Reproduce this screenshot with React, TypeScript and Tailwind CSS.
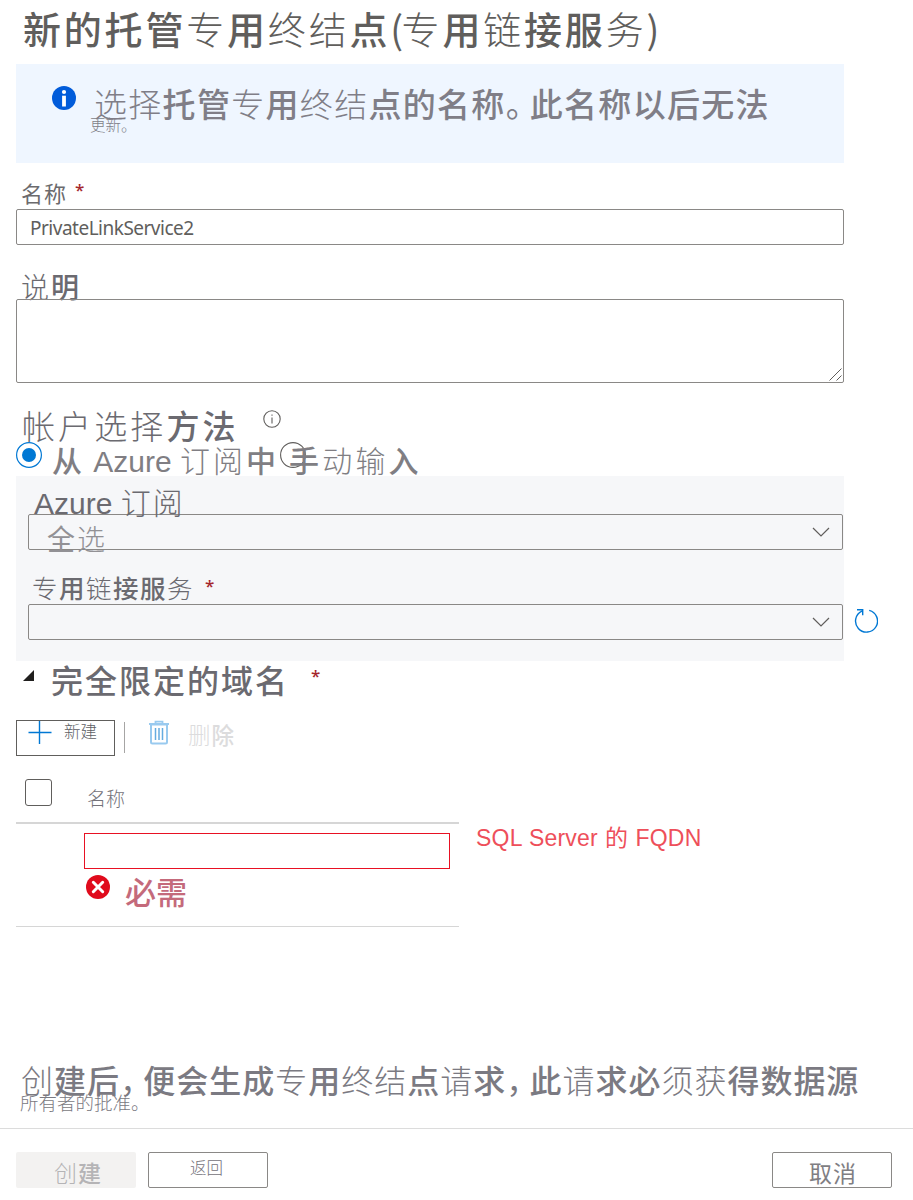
import type { ReactNode } from "react";

const LIGHT = "专终结链务选择帐户说订阅动输创请须获删";

type LabelProps = { text: string; className?: string; thin?: boolean; regular?: boolean };

/** Text run in which the simplified-only glyphs use the light face. */
function Label({ text, className = "", thin = false, regular = false }: LabelProps) {
  const runs = text.match(new RegExp(`[${LIGHT}]+|[A-Za-z ]+|[，。]|[()]|[^${LIGHT}A-Za-z ，。()]+`, "g")) ?? [];
  return (
    <span className={`inline-block whitespace-nowrap ${className}`}>
      {runs.map((run, i) => {
        let face = regular ? "font-normal" : "font-medium";
        if (thin || LIGHT.includes(run[0])) face = "font-light";
        else if (/[A-Za-z ]/.test(run[0])) face = "font-['Liberation_Sans'] font-normal tracking-normal";
        else if (/[()]/.test(run[0])) face = "font-normal tracking-[-1.5px]";
        else if (/[，。]/.test(run[0])) face = "font-normal tracking-[-0.27em]";
        return (
          <span key={i} className={face}>
            {run}
          </span>
        );
      })}
    </span>
  );
}

function Star({ className = "" }: { className?: string }) {
  return <span className={`font-['Noto_Sans'] text-[17px] leading-none font-medium text-[#a4262c] ${className}`}>*</span>;
}

function Chevron() {
  return (
    <svg className="shrink-0" width="18" height="10" viewBox="0 0 18 10" fill="none" stroke="#605e5c" strokeWidth="1.2">
      <path d="M1 1l8 8 8-8" />
    </svg>
  );
}

function Select({ children }: { children?: ReactNode }) {
  return (
    <div className="flex h-9 w-[815px] shrink-0 items-center justify-between rounded-[2px] border border-[#8a8886] pr-3 pl-[18px]">
      <div className="h-9 pt-px">{children}</div>
      <Chevron />
    </div>
  );
}

export default function App() {
  return (
    <div className="flex h-[1200px] w-[913px] flex-col overflow-hidden bg-white font-['Noto_Sans_CJK_SC',sans-serif]">
      <h1 className="h-16 pl-[23px] text-[#605e5c]">
        <Label text="新的托管专用终结点(专用链接服务)" className="text-[38px] leading-[56px] tracking-[2.8px]" />
      </h1>

      <section className="ml-4 flex h-[99px] w-[828px] shrink-0 bg-[#eff6ff] pl-9">
        <svg className="mt-[22px] shrink-0" width="24" height="24" viewBox="0 0 24 24">
          <circle cx="12" cy="12" r="12" fill="#015cda" />
          <circle cx="12" cy="6" r="2.1" fill="#fff" />
          <rect x="10.1" y="9.7" width="3.8" height="10.8" fill="#fff" />
        </svg>
        <div className="flex flex-col pl-[14px] text-[#807e87]">
          <Label text="选择托管专用终结点的名称。此名称以后无法" className="h-[53px] pt-[15px] pl-1 text-[33px] leading-[49px] tracking-[1.3px]" />
          <Label thin text="更新。" className="-mt-px text-[15.5px] leading-4" />
        </div>
      </section>

      <section className="h-[136px] shrink-0 pl-4">
        <div className="flex h-[46px] items-start pt-[17px] pl-[5px] text-[#6b6a6d]">
          <Label regular text="名称" className="text-[22px] leading-6 tracking-[1px]" />
          <Star className="ml-[8px] pt-px" />
        </div>
        <div className="flex h-9 w-[828px] items-center rounded-[2px] border border-[#8a8886] pt-[2px] pl-[13px] font-['Noto_Sans'] text-[19px] tracking-[-0.5px] text-[#605e5c]">
          PrivateLinkService2
        </div>
        <div className="pt-[25px] pl-[5px] text-[#6b6a70]">
          <Label text="说明" className="text-[28px] leading-8 tracking-[2px]" />
        </div>
      </section>

      <div className="ml-4 flex h-[84px] w-[828px] shrink-0 items-end justify-end rounded-[2px] border border-[#8a8886] p-px">
        <svg width="13" height="13" viewBox="0 0 13 13" stroke="#605e5c" strokeWidth="1">
          <path d="M0.5 12.5l12-12M7.5 12.5l5-5" />
        </svg>
      </div>

      <section className="flex h-[93px] shrink-0 flex-col pl-4">
        <div className="flex h-[59px] items-start pl-[6px] text-[#6b6a70]">
          <Label text="帐户选择方法" className="pt-5 text-[33px] leading-[44px] tracking-[3.1px]" />
          <svg className="mt-[27px] ml-6" width="18" height="18" viewBox="0 0 18 18" fill="none" stroke="#605e5c" strokeWidth="1.1">
            <circle cx="9" cy="9" r="8.2" />
            <path d="M9 7.5v6M9 4.5v1.3" />
          </svg>
        </div>
        <div className="flex h-[34px] items-start text-[#807e83]">
          <svg width="26" height="26" viewBox="0 0 26 26">
            <circle cx="13" cy="13" r="12.4" fill="#fff" stroke="#0078d4" strokeWidth="1.2" />
            <circle cx="13" cy="13" r="7" fill="#0078d4" />
          </svg>
          <Label text="从 Azure 订阅中" className="-mt-[2px] ml-[10px] w-[228px] text-[30px] leading-[39px] tracking-[3px]" />
          <svg className="shrink-0" width="26" height="26" viewBox="0 0 26 26">
            <circle cx="13" cy="13" r="12.4" fill="none" stroke="#605e5c" strokeWidth="1.1" />
          </svg>
          <Label text="手动输入" className="-mt-[2px] -ml-[17px] text-[30px] leading-[39px] tracking-[3.2px]" />
        </div>
      </section>

      <section className="ml-4 h-[185px] w-[828px] shrink-0 bg-[#f6f7f9] pl-3">
        <div className="h-[38px] pl-[6px] text-[#6b6a70]">
          <Label text="Azure 订阅" className="pt-[5px] text-[30px] leading-[40px] tracking-[2px]" />
        </div>
        <Select>
          <Label regular text="全选" className="pt-[3px] text-[28px] leading-10 tracking-[2px] text-[#929195]" />
        </Select>
        <div className="flex h-[54px] items-start pt-[21px] pl-[4px] text-[#6b6a70]">
          <Label text="专用链接服务" className="text-[25.5px] leading-8 tracking-[1.5px]" />
          <Star className="ml-[11px] pt-[6px]" />
        </div>
        <div className="flex w-[860px] items-center gap-[11px]">
          <Select />
          <svg className="-mt-[3px] shrink-0" width="24" height="25" viewBox="0 0 24 25" fill="none" stroke="#0078d4" strokeWidth="1.4">
            <path d="M7.9 3.1A11 11 0 1 0 15.2 2.4M3 1.7h5.7v5.6" />
          </svg>
        </div>
      </section>

      <section className="flex h-[59px] shrink-0 items-start pl-[23px] text-[#6b6a70]">
        <svg className="mt-[9px]" width="11" height="11" viewBox="0 0 11 11">
          <path d="M11 0v11H0z" fill="#201f1e" />
        </svg>
        <Label text="完全限定的域名" className="ml-[17px] text-[32px] leading-[36px] tracking-[2px]" />
        <Star className="ml-[22px] pt-[6px]" />
      </section>

      <section className="flex h-9 shrink-0 items-start pl-4">
        <button className="flex h-9 w-[99px] items-start border border-[#605e5c] pl-[11px]">
          <svg className="shrink-0" width="24" height="24" viewBox="0 0 24 24" stroke="#0078d4" strokeWidth="1.4">
            <path d="M.5 11.5h23M11.5 0v23" />
          </svg>
          <Label thin text="新建" className="ml-3 text-[16.5px] leading-[21px] text-[#605f65]" />
        </button>
        <div className="mt-[2px] ml-[9px] h-[31px] w-px bg-[#a6a5a4]" />
        <svg className="ml-[24px]" width="20" height="25" viewBox="0 0 20 25" fill="none" stroke="#99caef">
          <path d="M2 4.5h16v17.5q0 1.5-1.5 1.5h-13Q2 23.5 2 22z" strokeWidth="2" />
          <path d="M0 4h20M6.5 4V1.7h7V4" strokeWidth="1.8" />
          <path d="M6.5 8v12M10 8v12M13.5 8v12" stroke="#65ace0" strokeWidth="1.5" />
        </svg>
        <Label text="删除" className="ml-[19px] text-[22.5px] leading-[28px] tracking-[1px] text-[#dcdcdd]" />
      </section>

      <section className="flex h-[172px] shrink-0 items-start pl-4">
        <div className="w-[443px]">
          <div className="flex h-[68px] items-start border-b-2 border-[#d6d6d6] pt-[23px] pl-[9px]">
            <div className="h-[27px] w-[27px] rounded-[3px] border border-[#605e5c]" />
            <Label thin text="名称" className="ml-[35px] pt-2 text-[19px] leading-[22px] text-[#74727a]" />
          </div>
          <div className="h-[103px] border-b border-[#d6d6d6] pt-[9px] pl-[68px]">
            <div className="h-9 w-[366px] border border-[#e81123]" />
            <div className="flex items-start pt-[6px] pl-[2px]">
              <svg width="24" height="24" viewBox="0 0 24 24">
                <circle cx="12" cy="12" r="12" fill="#e00b1c" />
                <path d="M7.3 7.3l9.4 9.4M16.7 7.3l-9.4 9.4" stroke="#fff" strokeWidth="3" strokeLinecap="round" />
              </svg>
              <Label text="必需" className="ml-[15px] text-[31px] leading-[32px] text-[#c46a7b]" />
            </div>
          </div>
        </div>
        <div className="pt-[67px] pl-[17px] font-['Liberation_Sans','Noto_Sans_CJK_SC'] text-[23px] leading-[30px] tracking-[0.2px] whitespace-nowrap text-[#ee4f5a] [word-spacing:0.6px]">
          SQL Server 的 FQDN
        </div>
      </section>

      <section className="flex h-[201px] shrink-0 flex-col justify-start border-b border-[#dcdcdc] pt-[128px] pl-5 text-[#7b7a82]">
        <Label text="创建后，便会生成专用终结点请求，此请求必须获得数据源" className="h-[38px] pl-[1px] text-[32px] leading-[46px] tracking-[0.98px]" />
        <Label thin text="所有者的批准。" className="-mt-[2px] text-[18.5px] leading-5" />
      </section>

      <footer className="flex items-start pt-[23px] pl-4">
        <button className="h-9 w-[120px] rounded-[2px] bg-[#f3f2f1] pl-[4px] text-[#b5b4b6]">
          <Label text="创建" className="pt-[4px] text-[23px] leading-8 tracking-[1px]" />
        </button>
        <button className="ml-3 flex h-9 w-[120px] items-start rounded-[2px] border border-[#8a8886] pl-[41px] text-[#74727a]">
          <Label thin text="返回" className="text-[16.5px] leading-[28px]" />
        </button>
        <button className="ml-[504px] flex h-9 w-[120px] items-start rounded-[2px] border border-[#8a8886] pl-[36px] text-[#807e83]">
          <Label regular text="取消" className="pt-[3px] text-[23px] leading-8 tracking-[1px]" />
        </button>
      </footer>
    </div>
  );
}
